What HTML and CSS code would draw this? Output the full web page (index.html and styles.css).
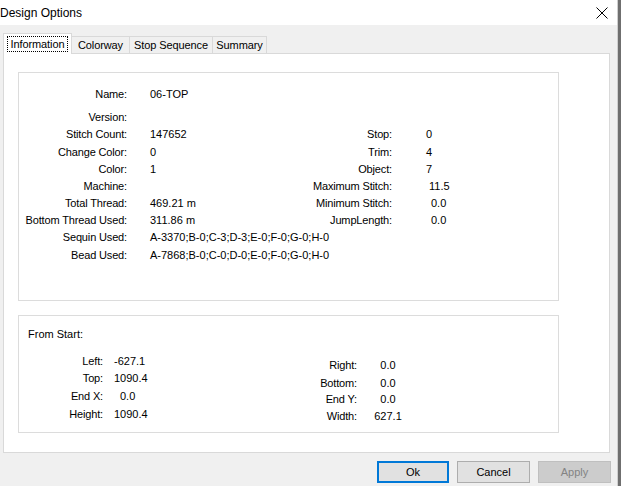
FILE: index.html
```html
<!DOCTYPE html>
<html>
<head>
<meta charset="utf-8">
<link rel="stylesheet" href="styles.css">
</head>
<body>
<div class="window">
  <div class="titlebar">
    <span class="title">Design Options</span>
    <svg class="close" width="12" height="12" viewBox="0 0 12 12"><path d="M0.5 0.5 L11.5 11.5 M11.5 0.5 L0.5 11.5" stroke="#000" stroke-width="1" fill="none"/></svg>
  </div>
  <div class="tabs">
    <div class="tab sel tab-info"><span class="focus">Information</span></div>
    <div class="tab tab-color">Colorway</div>
    <div class="tab tab-stop">Stop Sequence</div>
    <div class="tab tab-sum">Summary</div>
  </div>
  <div class="panel">
    <div class="group group1">
      <div class="info-grid">
        <span class="lbl">Name:</span><span class="val">06-TOP</span><span></span><span></span>
        <span class="lbl">Version:</span><span></span><span></span><span></span>
        <span class="lbl">Stitch Count:</span><span class="val">147652</span><span class="lbl">Stop:</span><span class="val2">0</span>
        <span class="lbl">Change Color:</span><span class="val">0</span><span class="lbl">Trim:</span><span class="val2">4</span>
        <span class="lbl">Color:</span><span class="val">1</span><span class="lbl">Object:</span><span class="val2">7</span>
        <span class="lbl">Machine:</span><span></span><span class="lbl">Maximum Stitch:</span><span class="val2 in3">11.5</span>
        <span class="lbl">Total Thread:</span><span class="val">469.21 m</span><span class="lbl">Minimum Stitch:</span><span class="val2 in5">0.0</span>
        <span class="lbl">Bottom Thread Used:</span><span class="val">311.86 m</span><span class="lbl">JumpLength:</span><span class="val2 in5">0.0</span>
        <span class="lbl">Sequin Used:</span><span class="val span3">A-3370;B-0;C-3;D-3;E-0;F-0;G-0;H-0</span>
        <span class="lbl">Bead Used:</span><span class="val span3">A-7868;B-0;C-0;D-0;E-0;F-0;G-0;H-0</span>
      </div>
    </div>
    <div class="group group2">
      <div class="fs-title">From Start:</div>
      <div class="fs-row">
        <div class="fs-left">
          <span class="lbl">Left:</span><span class="fval">-627.1</span>
          <span class="lbl">Top:</span><span class="fval">1090.4</span>
          <span class="lbl">End X:</span><span class="fval in6">0.0</span>
          <span class="lbl">Height:</span><span class="fval">1090.4</span>
        </div>
        <div class="fs-right">
          <span class="lbl">Right:</span><span class="cval">0.0</span>
          <span class="lbl">Bottom:</span><span class="cval">0.0</span>
          <span class="lbl">End Y:</span><span class="cval">0.0</span>
          <span class="lbl">Width:</span><span class="cval">627.1</span>
        </div>
      </div>
    </div>
  </div>
  <div class="buttons">
    <div class="btn default">Ok</div>
    <div class="btn">Cancel</div>
    <div class="btn disabled">Apply</div>
  </div>
</div>
</body>
</html>
```
FILE: styles.css
```css
html, body {
  margin: 0;
  padding: 0;
}
body {
  background: #6f6f6f;
  width: 621px;
  height: 486px;
  overflow: hidden;
  font-family: "Liberation Sans", Arial, sans-serif;
  font-size: 11px;
  color: #000;
}
.window {
  width: 618px;
  height: 486px;
  box-sizing: border-box;
  background: #f0f0f0;
  border-right: 1px solid #cfcfcf;
}
.titlebar {
  height: 25px;
  background: #fff;
  display: flex;
  align-items: center;
  justify-content: space-between;
  padding-right: 9px;
}
.title {
  font-size: 12px;
}
.close {
  display: block;
}
.tabs {
  margin-top: 8px;
  height: 20px;
  padding-left: 3px;
  display: flex;
  align-items: flex-end;
  font-size: 11px;
}
.tab {
  box-sizing: border-box;
  height: 17px;
  border: 1px solid #d9d9d9;
  border-bottom: none;
  border-left: none;
  background: #f0f0f0;
  display: flex;
  align-items: center;
  justify-content: center;
  line-height: 14px;
  white-space: nowrap;
  letter-spacing: -0.1px;
}
.tab.sel {
  height: 21px;
  margin-bottom: -1px;
  position: relative;
  z-index: 1;
  background: #fff;
  border-left: 1px solid #d9d9d9;
  align-items: flex-start;
  padding-top: 2px;
}
.tab-info { width: 69px; }
.tab-color { width: 58px; }
.tab-stop { width: 83px; }
.tab-sum { width: 54px; }
.focus {
  border: 1px dotted #000;
  padding: 0 3px;
  line-height: 14px;
}
.panel {
  margin-left: 3px;
  width: 607px;
  height: 400px;
  box-sizing: border-box;
  background: #fff;
  border: 1px solid #d9d9d9;
  padding: 18px 0 0 14px;
}
.group {
  width: 541px;
  box-sizing: border-box;
  border: 1px solid #dcdcdc;
}
.group1 {
  height: 229px;
  padding-top: 13px;
}
.group2 {
  margin-top: 14px;
  height: 118px;
  padding: 12px 0 0 9px;
}
.lbl {
  text-align: right;
  white-space: nowrap;
  letter-spacing: -0.15px;
}
.info-grid {
  display: grid;
  grid-template-columns: 108px 153px 112px auto;
  grid-template-rows: 17px 23px 17px 18px 17px 17px 17px 17px 17px 18px;
  align-items: end;
  line-height: 17px;
}
.val {
  padding-left: 23px;
  white-space: nowrap;
}
.val2 {
  padding-left: 34px;
}
.val2.in3 { padding-left: 37px; }
.val2.in5 { padding-left: 39px; }
.span3 {
  grid-column: span 3;
}
.fs-title {
  line-height: 13px;
}
.fs-row {
  display: flex;
  margin-top: 5px;
}
.fs-left {
  display: grid;
  grid-template-columns: 75px 50px;
  grid-template-rows: 24px 17px 18px 18px;
  align-items: end;
  line-height: 17px;
}
.fval {
  padding-left: 11px;
}
.fval.in6 { padding-left: 17px; }
.fs-right {
  margin-left: 144px;
  display: grid;
  grid-template-columns: 60px 30px;
  column-gap: 16px;
  grid-template-rows: 28px 18px 16px 17px;
  align-items: end;
  line-height: 17px;
}
.cval {
  text-align: center;
  white-space: nowrap;
}
.buttons {
  display: flex;
  justify-content: flex-end;
  gap: 8px;
  margin-top: 8px;
  padding-right: 6px;
}
.btn {
  width: 73px;
  height: 22px;
  box-sizing: border-box;
  background: #e1e1e1;
  border: 1px solid #adadad;
  display: flex;
  align-items: center;
  justify-content: center;
  font-size: 11px;
}
.btn.default {
  width: 72px;
  border: 2px solid #0078d7;
}
.btn.disabled {
  background: #cccccc;
  border-color: #bfbfbf;
  color: #838383;
}
```
